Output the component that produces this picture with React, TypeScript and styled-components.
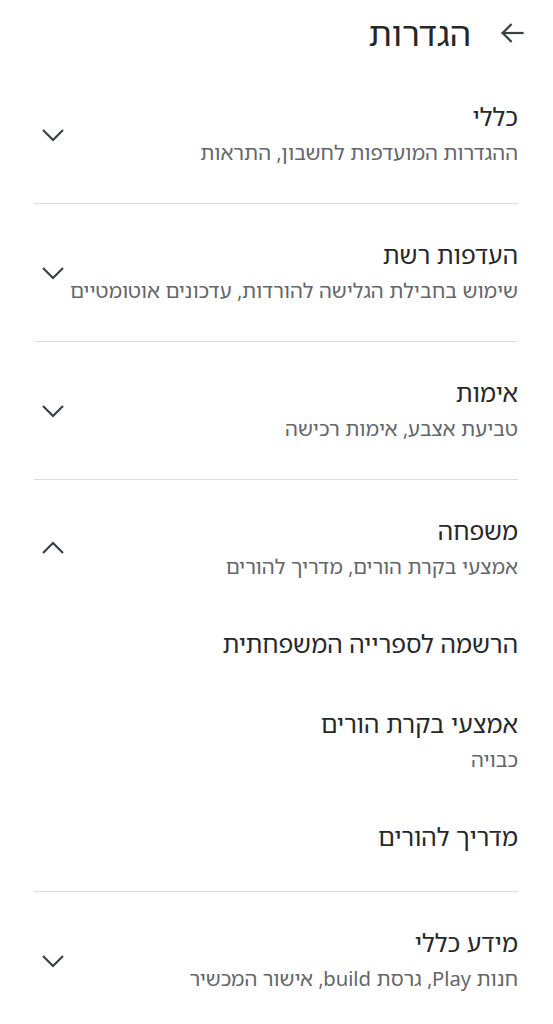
import { FC, useState } from 'react';
import styled, { createGlobalStyle } from 'styled-components';

const GlobalStyle = createGlobalStyle`
  html, body {
    margin: 0;
    padding: 0;
    background: #ffffff;
  }
  body {
    font-family: "Noto Sans Hebrew", Roboto, "Liberation Sans", sans-serif;
    color: #202124;
  }
`;

const Page = styled.div`
  direction: rtl;
  width: 100%;
  min-height: 100vh;
  background: #ffffff;
`;

const Header = styled.header`
  display: flex;
  align-items: center;
  height: 66px;
  padding: 0 26px 0 0;
  gap: 26px;
`;

const BackButton = styled.button`
  display: flex;
  align-items: center;
  justify-content: center;
  width: 30px;
  height: 30px;
  padding: 0;
  border: none;
  background: none;
  color: #3c4043;
  cursor: pointer;
`;

const Title = styled.h1`
  margin: 0;
  font-size: 34px;
  line-height: 40px;
  font-weight: 400;
  color: #26272a;
`;

const List = styled.div`
  display: flex;
  flex-direction: column;
  padding: 0 35px 0 34px;
`;

const Section = styled.section<{ $last?: boolean }>`
  border-bottom: ${({ $last }) => ($last ? 'none' : '1px solid #dadce0')};
`;

const SectionHead = styled.button`
  display: flex;
  align-items: center;
  justify-content: space-between;
  width: 100%;
  padding: 36px 0 38px;
  border: none;
  background: none;
  text-align: right;
  font: inherit;
  color: inherit;
  cursor: pointer;
`;

const TextBlock = styled.div`
  display: flex;
  flex-direction: column;
  gap: 7px;
`;

const ItemTitle = styled.div`
  font-size: 24.5px;
  line-height: 30px;
  color: #26272a;
`;

const ItemSub = styled.div`
  font-size: 20.5px;
  line-height: 26px;
  color: #63666a;
`;

const Chevron = styled.span`
  display: flex;
  margin-left: 7px;
  color: #3c4043;
`;

const SubList = styled.div`
  display: flex;
  flex-direction: column;
  margin-top: -13px;
  padding-bottom: 14px;
`;

const SubItem = styled.div`
  display: flex;
  flex-direction: column;
  gap: 7px;
  padding: 25px 0;
`;

type Entry = { title: string; sub?: string };
type Group = { title: string; sub: string; children?: Entry[] };

const groups: Group[] = [
  { title: 'כללי', sub: 'ההגדרות המועדפות לחשבון, התראות' },
  { title: 'העדפות רשת', sub: 'שימוש בחבילת הגלישה להורדות, עדכונים אוטומטיים' },
  { title: 'אימות', sub: 'טביעת אצבע, אימות רכישה' },
  {
    title: 'משפחה',
    sub: 'אמצעי בקרת הורים, מדריך להורים',
    children: [
      { title: 'הרשמה לספרייה המשפחתית' },
      { title: 'אמצעי בקרת הורים', sub: 'כבויה' },
      { title: 'מדריך להורים' },
    ],
  },
  { title: 'מידע כללי', sub: 'חנות Play, גרסת build, אישור המכשיר' },
];

const ArrowBack: FC = () => (
  <svg width="28" height="28" viewBox="0 0 24 24" fill="none" stroke="currentColor" strokeWidth="1.9" strokeLinecap="square">
    <path d="M21 12H4" />
    <path d="M11 5l-7 7 7 7" />
  </svg>
);

const ChevronIcon: FC<{ up: boolean }> = ({ up }) => (
  <svg width="24" height="24" viewBox="0 0 24 24" fill="none" stroke="currentColor" strokeWidth="2.2">
    {up ? <path d="M2 17L12 7l10 10" /> : <path d="M2 8l10 10 10-10" />}
  </svg>
);

export default function App() {
  const [open, setOpen] = useState<number | null>(3);

  return (
    <>
      <GlobalStyle />
      <Page>
        <Header>
          <BackButton aria-label="חזרה">
            <ArrowBack />
          </BackButton>
          <Title>הגדרות</Title>
        </Header>
        <List>
          {groups.map((g, i) => {
            const expanded = open === i;
            return (
              <Section key={g.title} $last={i === groups.length - 1}>
                <SectionHead onClick={() => setOpen(expanded ? null : i)}>
                  <TextBlock>
                    <ItemTitle>{g.title}</ItemTitle>
                    <ItemSub>{g.sub}</ItemSub>
                  </TextBlock>
                  <Chevron>
                    <ChevronIcon up={expanded} />
                  </Chevron>
                </SectionHead>
                {expanded && g.children && (
                  <SubList>
                    {g.children.map((c) => (
                      <SubItem key={c.title}>
                        <ItemTitle>{c.title}</ItemTitle>
                        {c.sub && <ItemSub>{c.sub}</ItemSub>}
                      </SubItem>
                    ))}
                  </SubList>
                )}
              </Section>
            );
          })}
        </List>
      </Page>
    </>
  );
}
